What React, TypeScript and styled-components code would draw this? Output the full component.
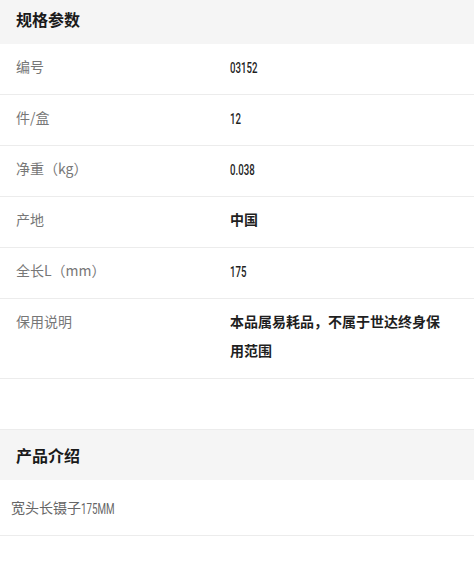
import React from "react";
import styled, { createGlobalStyle } from "styled-components";

const GlobalStyle = createGlobalStyle`
    html, body {
        margin: 0;
        padding: 0;
        background: #ffffff;
    }
    body {
        font-family: "Noto Sans CJK SC", "Noto Sans", sans-serif;
        color: #222222;
    }
`;

const Page = styled.div`
    width: 474px;
    margin-top: -6px;
    display: flex;
    flex-direction: column;
`;

const SectionHeader = styled.div<{ $divider?: boolean }>`
    height: 50px;
    display: flex;
    align-items: center;
    padding: 0 16px;
    background: #f5f5f5;
    border-top: ${({ $divider }) => ($divider ? "1px solid #ececec" : "none")};
    font-size: 16px;
    font-weight: 700;
    color: #1a1a1a;
`;

const SpecRow = styled.div`
    display: flex;
    padding: 8px 30px 13px 16px;
    border-bottom: 1px solid #ececec;
    font-size: 14px;
    line-height: 29px;
`;

const SpecLabel = styled.div`
    flex: 0 0 214px;
    color: #777777;
`;

const SpecValue = styled.div<{ $strong?: boolean }>`
    flex: 1;
    color: #1f1f1f;
    font-weight: ${({ $strong }) => ($strong ? 700 : 400)};
`;

// condensed numerals, as in the original's DIN-like face
const Num = styled.span<{ $squeeze?: number; $weight?: number }>`
    display: inline-block;
    vertical-align: top;
    font-family: Roboto, "Liberation Sans", sans-serif;
    font-weight: ${({ $weight }) => $weight ?? 500};
    transform: translateY(2px) scaleX(${({ $squeeze }) => $squeeze ?? 0.69});
    transform-origin: left center;
`;

const Spacer = styled.div`
    height: 50px;
`;

const Intro = styled.div`
    padding: 13px 11px 14px;
    border-bottom: 1px solid #ececec;
    font-size: 14px;
    line-height: 28px;
    color: #666666;
`;

const specs: { label: string; value: React.ReactNode; strong?: boolean }[] = [
    { label: "编号", value: <Num>03152</Num> },
    { label: "件/盒", value: <Num>12</Num> },
    { label: "净重（kg）", value: <Num>0.038</Num> },
    { label: "产地", value: "中国", strong: true },
    { label: "全长L（mm）", value: <Num>175</Num> },
    { label: "保用说明", value: "本品属易耗品，不属于世达终身保用范围", strong: true },
];

export default function App() {
    return (
        <>
            <GlobalStyle />
            <Page>
                <SectionHeader>规格参数</SectionHeader>
                {specs.map((s) => (
                    <SpecRow key={s.label}>
                        <SpecLabel>{s.label}</SpecLabel>
                        <SpecValue $strong={s.strong}>{s.value}</SpecValue>
                    </SpecRow>
                ))}
                <Spacer />
                <SectionHeader $divider>产品介绍</SectionHeader>
                <Intro>
                    宽头长镊子<Num $squeeze={0.7} $weight={400}>175MM</Num>
                </Intro>
            </Page>
        </>
    );
}
